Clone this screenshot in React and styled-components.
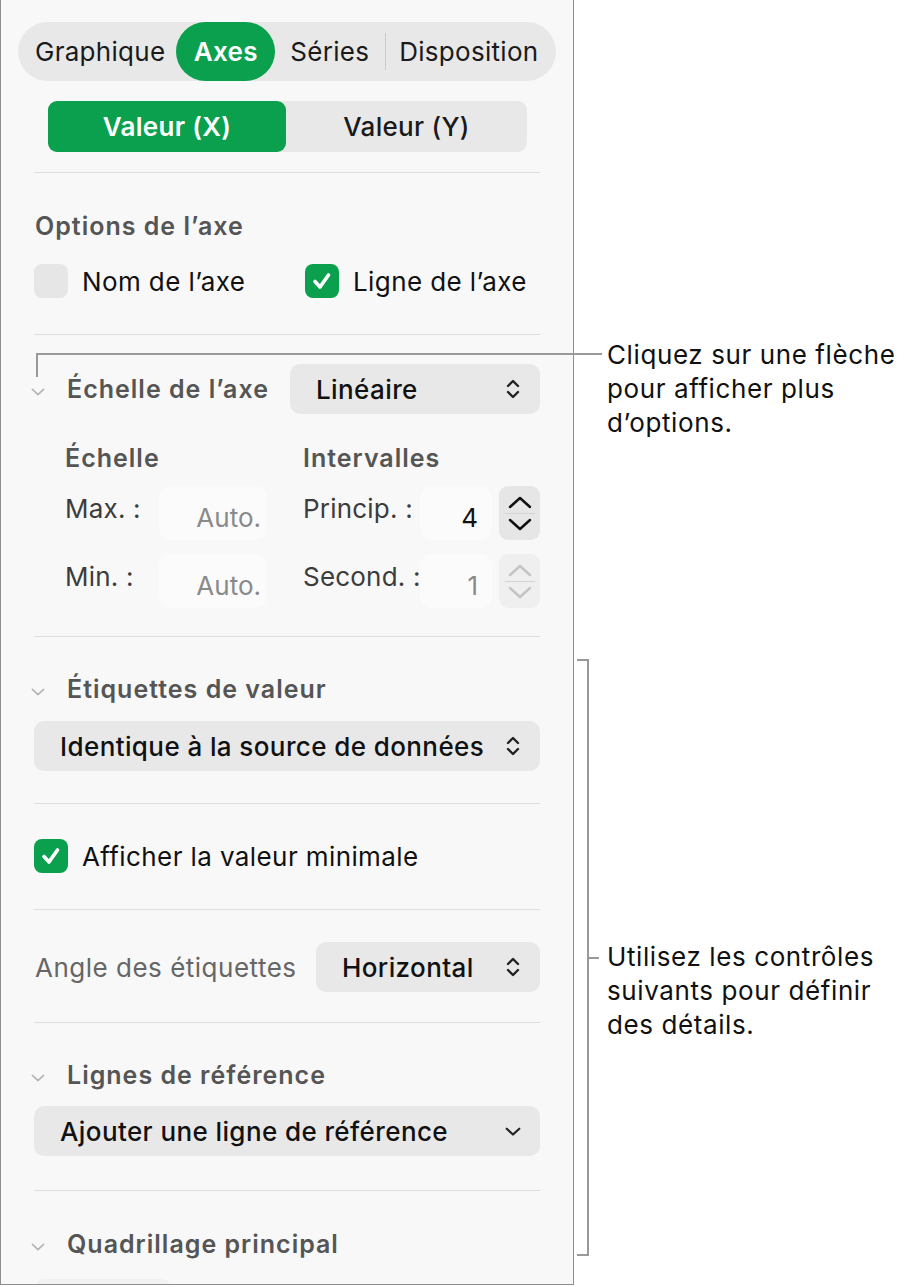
import React from "react";
import styled, { createGlobalStyle } from "styled-components";

const GlobalStyle = createGlobalStyle`
  body {
    margin: 0;
    background: #ffffff;
    font-family: Inter, "Noto Sans", "Liberation Sans", sans-serif;
    color: #111;
  }
`;

const green = "#0ba04e";

const UpDown = ({ color = "#222" }) => (
  <svg width="18" height="26" viewBox="0 0 18 26" fill="none">
    <path d="M4 10 L9 5 L14 10" stroke={color} strokeWidth="2.4" strokeLinecap="round" strokeLinejoin="round" />
    <path d="M4 16 L9 21 L14 16" stroke={color} strokeWidth="2.4" strokeLinecap="round" strokeLinejoin="round" />
  </svg>
);

const ChevronDown = ({ color = "#222", w = 18, sw = 2.4 }) => (
  <svg width={w} height={w * 0.6} viewBox="0 0 20 12" fill="none">
    <path d="M3 3 L10 9.5 L17 3" stroke={color} strokeWidth={sw} strokeLinecap="round" strokeLinejoin="round" />
  </svg>
);

const StepArrow = ({ color, up }) => (
  <svg width="26" height="14" viewBox="0 0 26 14" fill="none">
    <path
      d={up ? "M3 12 L13 3 L23 12" : "M3 2 L13 11 L23 2"}
      stroke={color}
      strokeWidth="2.5"
      strokeLinecap="round"
      strokeLinejoin="round"
    />
  </svg>
);

const Check = () => (
  <svg width="26" height="26" viewBox="0 0 26 26" fill="none">
    <path d="M6 13.5 L11 19 L19.5 7" stroke="#fff" strokeWidth="3.6" strokeLinecap="round" strokeLinejoin="round" />
  </svg>
);

const Checkbox = ({ on }) => <Box $on={on}>{on && <Check />}</Box>;

const Section = ({ title, children }) => (
  <HeaderRow>
    <Disclosure>
      <ChevronDown color="#b4b4b4" w={16} sw={2} />
    </Disclosure>
    <Title>{title}</Title>
    {children}
  </HeaderRow>
);

const Select = ({ label, single, width }) => (
  <Dropdown $width={width}>
    <span>{label}</span>
    {single ? <ChevronDown /> : <UpDown />}
  </Dropdown>
);

const Stepper = ({ disabled }) => {
  const c = disabled ? "#c4c4c4" : "#111";
  return (
    <StepBox $disabled={disabled}>
      <StepArrow color={c} up />
      <StepLine />
      <StepArrow color={c} />
    </StepBox>
  );
};

const App = () => {
  return (
    <>
      <GlobalStyle />
      <Page>
        <Panel>
          <TabBar>
            <Tab $w={153}>Graphique</Tab>
            <Tab $w={99} $active>Axes</Tab>
            <Tab $w={110}>Séries</Tab>
            <TabDivider />
            <Tab $w={167}>Disposition</Tab>
          </TabBar>

          <Segmented>
            <Segment $active>Valeur (X)</Segment>
            <Segment>Valeur (Y)</Segment>
          </Segmented>
          <Divider $top={20} />

          <Block $top={38} $bottom={36}>
            <Heading>Options de l’axe</Heading>
            <CheckRow>
              <CheckItem $w={271}>
                <Checkbox />
                <span>Nom de l’axe</span>
              </CheckItem>
              <CheckItem>
                <Checkbox on />
                <span>Ligne de l’axe</span>
              </CheckItem>
            </CheckRow>
          </Block>
          <Divider />

          <Block $top={29} $bottom={28}>
            <Section title="Échelle de l’axe">
              <Select label="Linéaire" width={250} />
            </Section>
            <ScaleGrid>
              <ScaleCol>
                <SubHeading>Échelle</SubHeading>
                <FieldRow>
                  <FieldLabel $w={94}>Max. :</FieldLabel>
                  <ValueField $w={108} $muted>Auto.</ValueField>
                </FieldRow>
                <FieldRow>
                  <FieldLabel $w={94}>Min. :</FieldLabel>
                  <ValueField $w={108} $muted>Auto.</ValueField>
                </FieldRow>
              </ScaleCol>
              <ScaleCol>
                <SubHeading>Intervalles</SubHeading>
                <FieldRow>
                  <FieldLabel $w={117}>Princip. :</FieldLabel>
                  <ValueField $w={72} $num>4</ValueField>
                  <Stepper />
                </FieldRow>
                <FieldRow>
                  <FieldLabel $w={117}>Second. :</FieldLabel>
                  <ValueField $w={72} $num $muted>1</ValueField>
                  <Stepper disabled />
                </FieldRow>
              </ScaleCol>
            </ScaleGrid>
          </Block>
          <Divider />

          <Block $top={37} $bottom={32}>
            <Section title="Étiquettes de valeur" />
            <Spacer $h={17} />
            <Select label="Identique à la source de données" />
          </Block>
          <Divider />

          <Block $top={35} $bottom={36}>
            <CheckItem>
              <Checkbox on />
              <span>Afficher la valeur minimale</span>
            </CheckItem>
          </Block>
          <Divider />

          <Block $top={32} $bottom={30}>
            <InlineRow>
              <PlainLabel>Angle des étiquettes</PlainLabel>
              <Select label="Horizontal" width={224} />
            </InlineRow>
          </Block>
          <Divider />

          <Block $top={37} $bottom={34}>
            <Section title="Lignes de référence" />
            <Spacer $h={16} />
            <Select label="Ajouter une ligne de référence" single />
          </Block>
          <Divider />

          <Block $top={38} $bottom={0}>
            <Section title="Quadrillage principal" />
            <Stub />
          </Block>
        </Panel>

        {/* callout: disclosure arrow */}
        <LineH style={{ left: 36, top: 353, width: 566 }} />
        <LineV style={{ left: 36, top: 353, height: 24 }} />
        <Note style={{ top: 338 }}>
          Cliquez sur une flèche
          <br />
          pour afficher plus
          <br />
          d’options.
        </Note>

        {/* callout: bracket */}
        <LineV style={{ left: 587, top: 659, height: 597 }} />
        <LineH style={{ left: 577, top: 659, width: 12 }} />
        <LineH style={{ left: 577, top: 1254, width: 12 }} />
        <LineH style={{ left: 587, top: 957, width: 12 }} />
        <Note style={{ top: 940 }}>
          Utilisez les contrôles
          <br />
          suivants pour définir
          <br />
          des détails.
        </Note>
      </Page>
    </>
  );
};

export default App;

// layout
const Page = styled.div`
  position: relative;
  width: 904px;
  height: 1287px;
  display: flex;
`;

const Panel = styled.div`
  box-sizing: border-box;
  width: 574px;
  height: 1285px;
  border: 1px solid #8e8e8e;
  border-top: none;
  background: #f8f8f8;
  padding: 0 33px;
  display: flex;
  flex-direction: column;
  overflow: hidden;
`;

const Block = styled.div`
  padding-top: ${(p) => p.$top}px;
  padding-bottom: ${(p) => p.$bottom}px;
  display: flex;
  flex-direction: column;
`;

const Divider = styled.div`
  height: 1px;
  flex-shrink: 0;
  margin-top: ${(p) => p.$top || 0}px;
  background: #dedede;
`;

const Spacer = styled.div`
  height: ${(p) => p.$h}px;
`;

// tabs
const TabBar = styled.div`
  margin: 22px -16px 0 -16px;
  height: 59px;
  border-radius: 30px;
  background: #e8e8e8;
  display: flex;
  align-items: center;
  padding: 0 4px 0 6px;
  flex-shrink: 0;
`;

const Tab = styled.div`
  width: ${(p) => p.$w}px;
  height: 100%;
  display: flex;
  align-items: center;
  justify-content: center;
  border-radius: 30px;
  font-size: 26px;
  font-weight: ${(p) => (p.$active ? 600 : 400)};
  letter-spacing: 0.3px;
  color: ${(p) => (p.$active ? "#fff" : "#1a1a1a")};
  background: ${(p) => (p.$active ? green : "transparent")};
`;

const TabDivider = styled.div`
  width: 1px;
  height: 37px;
  background: #c9c9c9;
`;

const Segmented = styled.div`
  margin: 20px 13px 0 14px;
  height: 51px;
  border-radius: 9px;
  background: #e8e8e8;
  display: grid;
  grid-template-columns: 238px 1fr;
  flex-shrink: 0;
`;

const Segment = styled.div`
  display: flex;
  align-items: center;
  justify-content: center;
  border-radius: 9px;
  font-size: 26px;
  font-weight: ${(p) => (p.$active ? 600 : 500)};
  letter-spacing: 0.3px;
  color: ${(p) => (p.$active ? "#fff" : "#1a1a1a")};
  background: ${(p) => (p.$active ? green : "transparent")};
`;

// text
const Heading = styled.div`
  line-height: 30px;
  font-size: 25px;
  font-weight: 600;
  letter-spacing: 1px;
  color: #555;
  margin-left: 1px;
`;

const Title = styled(Heading)`
  margin-left: 21px;
  white-space: nowrap;
`;

const PlainLabel = styled.div`
  font-size: 26px;
  letter-spacing: 0.5px;
  color: #666;
  margin-left: 1px;
  white-space: nowrap;
`;

const Note = styled.div`
  position: absolute;
  left: 607px;
  font-size: 26px;
  letter-spacing: 0.6px;
  line-height: 34px;
  color: #111;
  white-space: nowrap;
`;

const LineH = styled.div`
  position: absolute;
  height: 2px;
  background: #999;
`;

const LineV = styled.div`
  position: absolute;
  width: 2px;
  background: #999;
`;

// checkboxes
const CheckRow = styled.div`
  display: flex;
  margin-top: 23px;
`;

const CheckItem = styled.div`
  display: flex;
  align-items: center;
  gap: 14px;
  width: ${(p) => (p.$w ? `${p.$w}px` : "auto")};
  font-size: 26px;
  letter-spacing: 0.4px;
  color: #111;
  white-space: nowrap;
`;

const Box = styled.div`
  width: 34px;
  height: 34px;
  flex-shrink: 0;
  border-radius: 8px;
  box-sizing: border-box;
  display: flex;
  align-items: center;
  justify-content: center;
  background: ${(p) => (p.$on ? green : "#e6e6e6")};
`;

// sections
const HeaderRow = styled.div`
  display: flex;
  align-items: center;
  min-height: 30px;
`;

const Disclosure = styled.div`
  width: 16px;
  margin-left: -4px;
  margin-top: 5px;
  display: flex;
  align-items: center;
`;

const InlineRow = styled.div`
  display: flex;
  align-items: center;
  justify-content: space-between;
`;

const Dropdown = styled.div`
  box-sizing: border-box;
  width: ${(p) => (p.$width ? `${p.$width}px` : "100%")};
  margin-left: auto;
  height: 50px;
  border-radius: 10px;
  background: #e8e8e8;
  display: flex;
  align-items: center;
  justify-content: space-between;
  padding: 0 18px 0 26px;
  font-size: 26px;
  font-weight: 500;
  letter-spacing: 0.4px;
  color: #111;
  white-space: nowrap;
`;

// scale grid
const ScaleGrid = styled.div`
  display: flex;
  gap: 36px;
  padding-left: 31px;
  margin-top: 29px;
`;

const ScaleCol = styled.div`
  display: flex;
  flex-direction: column;
  gap: 14px;
`;

const SubHeading = styled(Heading)`
  margin-left: 0;
  margin-bottom: -1px;
`;

const FieldRow = styled.div`
  display: flex;
  align-items: center;
  height: 54px;
`;

const FieldLabel = styled.div`
  width: ${(p) => p.$w}px;
  font-size: 26px;
  letter-spacing: 0.2px;
  color: #3c3c3c;
  padding-bottom: 10px;
  white-space: nowrap;
`;

const ValueField = styled.div`
  box-sizing: border-box;
  width: ${(p) => p.$w}px;
  height: 54px;
  border-radius: 12px;
  background: rgba(255, 255, 255, 0.45);
  display: flex;
  align-items: center;
  justify-content: flex-end;
  padding: 8px ${(p) => (p.$num ? "14px" : "6px")} 0 6px;
  font-size: 26px;
  color: ${(p) => (p.$muted ? "#8a8a8a" : "#111")};
  margin-right: ${(p) => (p.$num ? "7px" : "0")};
`;

const StepBox = styled.div`
  width: 41px;
  height: 54px;
  border-radius: 9px;
  background: ${(p) => (p.$disabled ? "#efefef" : "#e6e6e6")};
  display: flex;
  flex-direction: column;
  align-items: center;
  justify-content: center;
  gap: 4px;
`;

const StepLine = styled.div`
  width: 30px;
  height: 1px;
  background: #d4d4d4;
`;

const Stub = styled.div`
  margin-top: 20px;
  width: 134px;
  height: 8px;
  border-radius: 8px 8px 0 0;
  background: #f1f1f1;
  margin-left: 2px;
`;
